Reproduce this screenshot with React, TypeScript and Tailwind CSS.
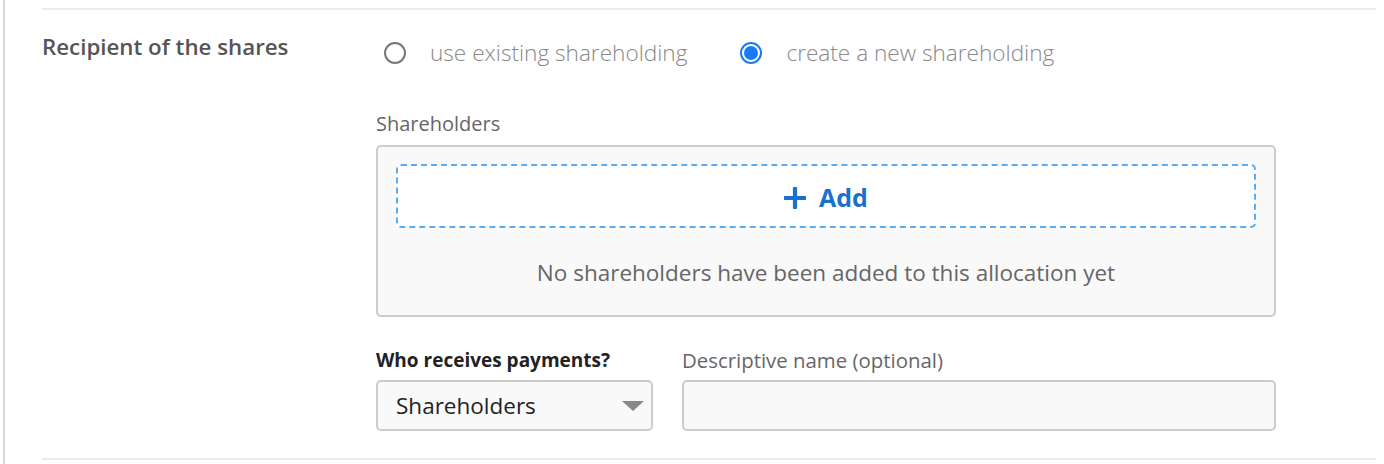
import { useState } from "react";

const font = { fontFamily: "'Open Sans', 'Noto Sans', sans-serif" };

const Radio = ({ checked, label }: { checked: boolean; label: string }) => (
  <label className="flex cursor-pointer items-center">
    {checked ? (
      <span className="flex h-[22px] w-[22px] items-center justify-center rounded-full border-2 border-[#1a7cf5] bg-white">
        <span className="h-[14px] w-[14px] rounded-full bg-[#1a7cf5]" />
      </span>
    ) : (
      <span className="h-[22px] w-[22px] rounded-full border-2 border-[#777777] bg-white" />
    )}
    <span className="ml-[24px] text-[22.6px] font-light leading-[30px] text-[#888888]">
      {label}
    </span>
  </label>
);

export default function App() {
  const [mode, setMode] = useState<"existing" | "new">("new");

  return (
    <div className="h-[464px] w-[1384px] bg-white pl-[3px]" style={font}>
      <div className="h-full border-l-2 border-[#d6d6d6] pl-[37px] pt-[8px]">
        <div className="mr-[8px] flex border-y-2 border-[#ebebeb] pb-[27px] pt-[22px]">
          <div className="w-[334px] text-[22.3px] font-semibold leading-[30px] text-[#555555]">
            Recipient of the shares
          </div>
          <div className="flex flex-col">
            <div className="flex h-[42px] items-center gap-[53px] pl-[8px]">
              <div onClick={() => setMode("existing")}>
                <Radio checked={mode === "existing"} label="use existing shareholding" />
              </div>
              <div onClick={() => setMode("new")}>
                <Radio checked={mode === "new"} label="create a new shareholding" />
              </div>
            </div>

            <div className="mt-[36px] text-[20px] leading-[28px] text-[#666666]">Shareholders</div>
            <div className="mt-[7px] flex w-[900px] flex-col rounded-[5px] border-2 border-[#cccccc] bg-[#f9f9f9] px-[18px] pb-[27px] pt-[17px]">
              <button className="flex h-[64px] items-center justify-center gap-[13px] rounded-[5px] border-2 border-dashed border-[#5aaaf6] bg-white pt-[3px] text-[25px] font-bold text-[#1b6fd2]">
                <svg width="22" height="22" viewBox="0 0 22 22">
                  <path d="M11 1.5v19M1.5 11h19" stroke="#1b6fd2" strokeWidth="4.2" strokeLinecap="round" />
                </svg>
                Add
              </button>
              <p className="mt-[30px] text-center text-[22.5px] leading-[30px] text-[#666666]">
                No shareholders have been added to this allocation yet
              </p>
            </div>

            <div className="mt-[30px] flex gap-[29px]">
              <div className="flex flex-col">
                <div className="text-[19px] font-bold leading-[26px] text-[#222222]">
                  Who receives payments?
                </div>
                <div className="mt-[7px] flex h-[51px] w-[277px] items-center justify-between rounded-[5px] border-2 border-[#cccccc] bg-[#f9f9f9] pl-[18px] pr-[7px]">
                  <span className="text-[22.5px] text-[#222222]">Shareholders</span>
                  <svg width="22" height="10" viewBox="0 0 22 10">
                    <path d="M0 0h22L11 10z" fill="#888888" />
                  </svg>
                </div>
              </div>
              <div className="flex flex-col">
                <div className="text-[20.4px] leading-[26px] text-[#666666]">
                  Descriptive name (optional)
                </div>
                <input
                  className="mt-[7px] h-[51px] w-[594px] rounded-[5px] border-2 border-[#cccccc] bg-[#f9f9f9] px-[14px] text-[22px] outline-none"
                  style={font}
                />
              </div>
            </div>
          </div>
        </div>
      </div>
    </div>
  );
}
